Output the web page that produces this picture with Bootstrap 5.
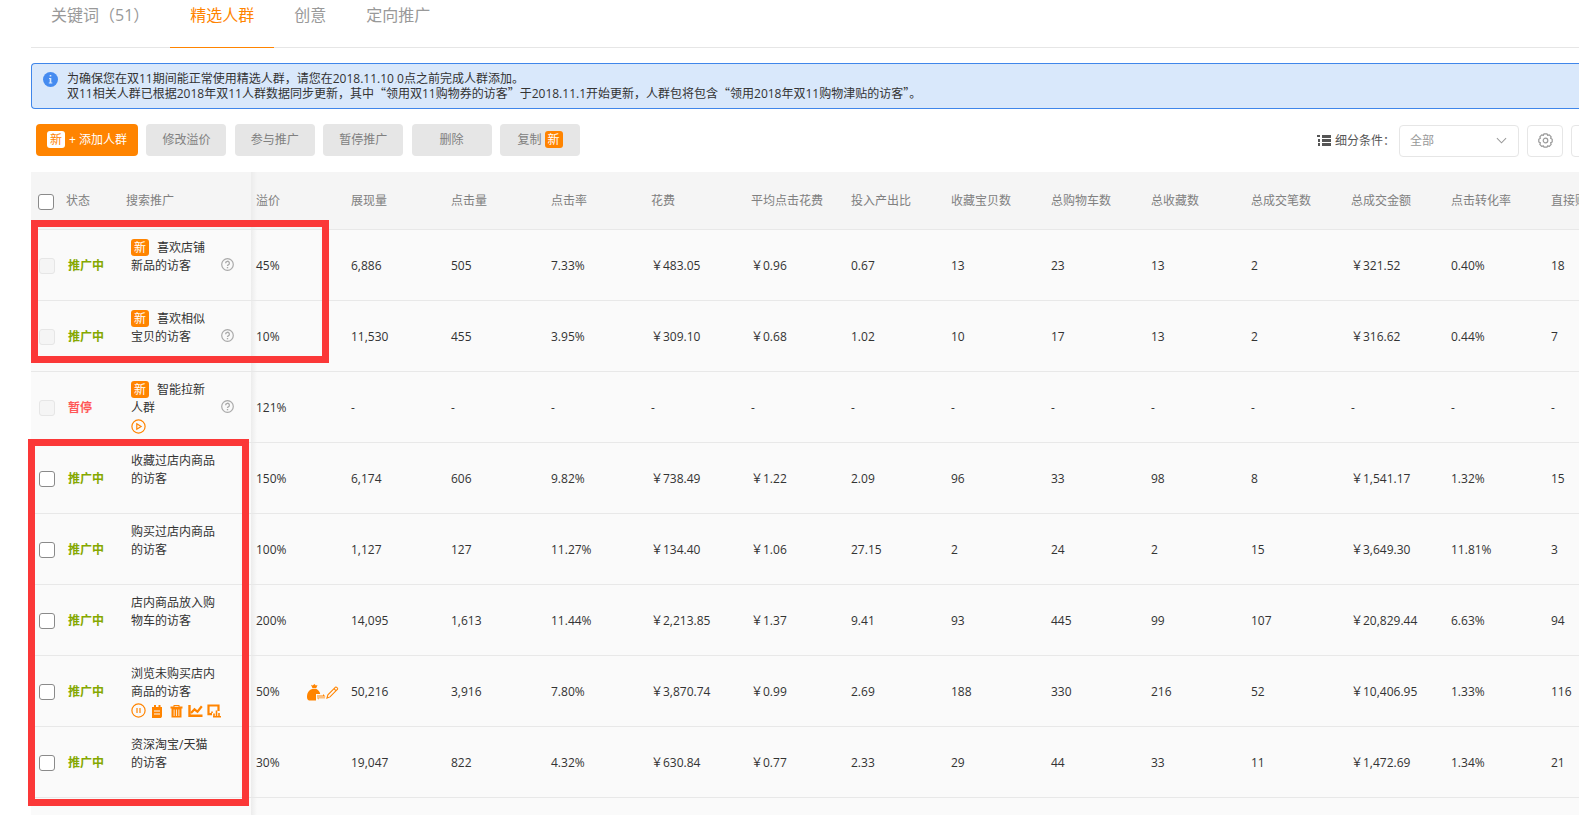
<!DOCTYPE html>
<html lang="zh-CN">
<head>
<meta charset="utf-8">
<meta name="viewport" content="width=device-width, initial-scale=1">
<title>精选人群</title>
<link href="https://cdn.jsdelivr.net/npm/bootstrap@5.3.0/dist/css/bootstrap.min.css" rel="stylesheet">
<style>
  :root { --brand: #ff8400; --line: #e6e6e6; }
  body { font-family: "Open Sans", "Noto Sans CJK SC", sans-serif; font-size: 12px; line-height: 18px; color: #333; background: #fff; }
  .page { padding-left: 31px; height: 100vh; overflow: hidden; }
  .cjk { font-family: "Noto Sans CJK SC", sans-serif; }

  .tabs { border-bottom: 1px solid var(--line); padding-top: 3px; flex-wrap: nowrap; }
  .tabs .nav-link { color: #999; font-size: 16px; line-height: 24px; padding: 0 20px 20px; margin-bottom: -1px; border-bottom: 1px solid transparent; white-space: nowrap; }
  .tabs .nav-link.active { color: var(--brand); border-color: var(--brand); }
  .tabs .nav-item:first-child { padding-right: 1px; }

  .notice { margin: 15px 0 0; padding: 8px 0 8px 11px; gap: 9px; line-height: 14px; color: #333; background: #d9e8fb; border: 1px solid #3f86ea; border-right: 0; border-radius: 4px 0 0 4px; height: 46px; }

  .toolbar { margin-top: 15px; padding-left: 5px; height: 32px; }
  .actions { width: 544px; }
  .act { width: 80px; height: 32px; padding: 0; font-size: 12px; line-height: 18px; color: #808080; background: #e6e6e6; border: 0; border-radius: 4px; white-space: nowrap; }
  .act-main { width: 102px; color: #fff; background: var(--brand); }
  .act:hover { background: #dcdcdc; }
  .act-main:hover { color: #fff; background: #f07c00; }
  .tag-new { display: inline-block; width: 18px; height: 17px; line-height: 17px; text-align: center; border-radius: 3px; color: #fff; background: var(--brand); }
  .act-main .tag-new { margin-right: 1px; color: var(--brand); background: #fff; }

  .filters { margin-right: -28px; padding-top: 1px; color: #555; }
  .filters .form-select { width: 120px; height: 32px; margin: 0 8px 0 4px; padding: 0 30px 0 10px; font-size: 12px; color: #999; border-color: var(--line); border-radius: 4px;
    background-image: url("data:image/svg+xml,%3Csvg xmlns='http://www.w3.org/2000/svg' viewBox='0 0 12 12'%3E%3Cpath d='M1 3.5l5 5 5-5' fill='none' stroke='%23999' stroke-width='1.1'/%3E%3C/svg%3E"); background-position: right 11px center; background-size: 11px 11px; }
  .sq { width: 36px; height: 32px; padding: 0; border: 1px solid var(--line); border-radius: 4px; color: #999; }

  .board { margin-top: 16px; }
  .grid { width: 1615px; table-layout: fixed; border-collapse: separate; border-spacing: 0; margin: 0; color: #333; }
  .grid > :not(caption) > * > * { padding: 0 0 0 5px; border-bottom: 1px solid #e8e8e8; background: #fafafa; color: #333; vertical-align: middle; white-space: nowrap; box-shadow: none; }
  .grid > thead > tr > th { height: 58px; font-weight: 400; color: #808080; background: #f5f5f5; }
  .grid > tbody > tr > td { height: 71px; padding-top: 2px; }
  .grid > * > tr > :first-child { padding-left: 8px; }
  .grid > tbody > tr > :first-child { padding-top: 0; }
  .grid > * > tr > :nth-child(2) { padding-left: 2px; font-weight: 700; color: #85a800; }
  .grid > thead > tr > :nth-child(2) { padding-left: 0; font-weight: 400; color: #808080; }
  .grid > thead > tr > :nth-child(3) { padding-left: 0; }
  .grid > thead > tr > :first-child { padding-left: 7px; }
  .grid > * > tr > :nth-child(4) { background-image: linear-gradient(90deg, #ececec, rgba(250, 250, 250, 0)); background-size: 6px 100%; background-repeat: no-repeat; }
  .grid > tbody > tr > td.paused { color: #ff5757; }
  .grid > tbody > tr > td.who { vertical-align: top; padding-top: 9px; white-space: normal; }
  .who-text { width: 86px; }
  .who-text .tag-new { margin-right: 8px; }
  .grid .form-check-input { display: block; width: 16px; height: 16px; margin: 2px 0 0; border: 1px solid #8a8a8a; border-radius: 3px; background-color: #fff; }
  .grid .form-check-input:disabled { border-color: var(--line); background-color: #f5f5f5; opacity: 1; }
  .help { margin: 19px 0 0 4px; color: #aaa; line-height: 1; }
  .tools { gap: 4px; height: 18px; }
  .tool { display: block; padding: 0; border: 0; background: none; color: var(--brand); line-height: 1; }
  .tool svg, .help svg, .sq svg, .notice svg, .filters svg { display: block; }
  .bid { padding-right: 7px; }

  .frame { position: absolute; border: 7px solid #fb3838; pointer-events: none; }
  .frame-top { left: 0; top: 48px; width: 298px; height: 143px; }
  .frame-bottom { left: -3px; top: 267px; width: 221px; height: 367px; }
</style>
</head>
<body>
<svg width="0" height="0" class="d-none" aria-hidden="true">
  <symbol id="i-help" viewBox="0 0 13 13"><circle cx="6.5" cy="6.5" r="5.8" fill="none" stroke="currentColor" stroke-width="1.2"/><path d="M4.600 5.200a1.900 1.900 0 1 1 2.700 1.700c-.6.3-.8.6-.8 1.200" fill="none" stroke="currentColor" stroke-width="1.300"/><path d="M5.800 9h1.400v1.300H5.800z" fill="currentColor"/></symbol>
</svg>
<main class="page">
  <ul class="nav tabs">
    <li class="nav-item"><a class="nav-link" href="#">关键词（51）</a></li>
    <li class="nav-item"><a class="nav-link active" aria-current="page" href="#">精选人群</a></li>
    <li class="nav-item"><a class="nav-link" href="#">创意</a></li>
    <li class="nav-item"><a class="nav-link" href="#">定向推广</a></li>
  </ul>

  <div class="notice d-flex align-items-start" role="note">
    <svg width="15" height="15" viewBox="0 0 15 15" class="flex-shrink-0" aria-hidden="true"><circle cx="7.500" cy="7.500" r="7.500" fill="#458bf0"/><path d="M6.700 3h1.600v1.600H6.700zM6 6h2.300v4.600h1v1H5.800v-1h.9V7H6z" fill="#d9e8fb"/></svg>
    <div>为确保您在双11期间能正常使用精选人群，请您在2018.11.10 0点之前完成人群添加。<br>双11相关人群已根据2018年双11人群数据同步更新，其中<span class="cjk">“</span>领用双11购物券的访客<span class="cjk">”</span>于2018.11.1开始更新，人群包将包含<span class="cjk">“</span>领用2018年双11购物津贴的访客<span class="cjk">”</span>。</div>
  </div>

  <div class="toolbar d-flex justify-content-between">
    <div class="actions d-flex justify-content-between">
      <button type="button" class="btn act act-main"><span class="tag-new">新</span> + 添加人群</button>
      <button type="button" class="btn act">修改溢价</button>
      <button type="button" class="btn act">参与推广</button>
      <button type="button" class="btn act">暂停推广</button>
      <button type="button" class="btn act">删除</button>
      <button type="button" class="btn act">复制 <span class="tag-new">新</span></button>
    </div>
    <div class="filters d-flex align-items-center">
      <svg width="14" height="11" viewBox="0 0 14 11" class="me-1" aria-hidden="true"><path d="M0 0h3v2H0zM5 0h9v3H5zM1 4h2v3H1zM5 4h9v3H5zM1 8h2v3H1zM5 8h9v3H5z" fill="#555"/></svg>
      <label for="segment">细分条件：</label>
      <select id="segment" class="form-select"><option>全部</option></select>
      <button type="button" class="btn sq d-flex align-items-center justify-content-center me-2" aria-label="设置">
        <svg width="15" height="15" viewBox="0 0 15 15" fill="none" stroke="currentColor" stroke-width="1.200"><path d="M6 .8h3l.6 1.500 1.700-.5 1.900 2-.6 1.500 1.600.9v2.700l-1.600.9.6 1.500-1.900 2-1.700-.5L9 14.200H6l-.6-1.400-1.700.5-1.900-2 .6-1.500L.8 8.900V6.200l1.600-.9-.6-1.500 1.900-2 1.700.5z" stroke-linejoin="round"/><circle cx="7.500" cy="7.500" r="2.300"/></svg>
      </button>
      <button type="button" class="btn sq" aria-label="更多"></button>
    </div>
  </div>

  <div class="board position-relative">
    <table class="table grid">
      <colgroup><col style="width:35px"><col style="width:60px"><col style="width:125px"><col style="width:95px"><col span="13" style="width:100px"></colgroup>
      <thead>
        <tr><th><input class="form-check-input" type="checkbox" aria-label="全选"></th><th>状态</th><th>搜索推广</th><th>溢价</th><th>展现量</th><th>点击量</th><th>点击率</th><th>花费</th><th>平均点击花费</th><th>投入产出比</th><th>收藏宝贝数</th><th>总购物车数</th><th>总收藏数</th><th>总成交笔数</th><th>总成交金额</th><th>点击转化率</th><th>直接购物车数</th></tr>
      </thead>
      <tbody>
        <tr>
          <td><input class="form-check-input" type="checkbox" disabled aria-label="喜欢店铺新品的访客"></td><td>推广中</td>
          <td class="who"><div class="d-flex"><div class="who-text"><span class="tag-new">新</span>喜欢店铺<br>新品的访客</div><span class="help"><svg width="13" height="13"><use href="#i-help"/></svg></span></div></td>
          <td>45%</td><td>6,886</td><td>505</td><td>7.33%</td><td>￥483.05</td><td>￥0.96</td><td>0.67</td><td>13</td><td>23</td><td>13</td><td>2</td><td>￥321.52</td><td>0.40%</td><td>18</td>
        </tr>
        <tr>
          <td><input class="form-check-input" type="checkbox" disabled aria-label="喜欢相似宝贝的访客"></td><td>推广中</td>
          <td class="who"><div class="d-flex"><div class="who-text"><span class="tag-new">新</span>喜欢相似<br>宝贝的访客</div><span class="help"><svg width="13" height="13"><use href="#i-help"/></svg></span></div></td>
          <td>10%</td><td>11,530</td><td>455</td><td>3.95%</td><td>￥309.10</td><td>￥0.68</td><td>1.02</td><td>10</td><td>17</td><td>13</td><td>2</td><td>￥316.62</td><td>0.44%</td><td>7</td>
        </tr>
        <tr>
          <td><input class="form-check-input" type="checkbox" disabled aria-label="智能拉新人群"></td><td class="paused">暂停</td>
          <td class="who"><div class="d-flex"><div class="who-text"><span class="tag-new">新</span>智能拉新<br>人群</div><span class="help"><svg width="13" height="13"><use href="#i-help"/></svg></span></div>
            <div class="tools d-flex align-items-center"><button type="button" class="tool" aria-label="启动"><svg width="15" height="15" viewBox="0 0 15 15" fill="none" stroke="currentColor" stroke-width="1.200"><circle cx="7.500" cy="7.500" r="6.600"/><path d="M5.800 4.800l4.300 2.700-4.300 2.700z"/></svg></button></div></td>
          <td>121%</td><td>-</td><td>-</td><td>-</td><td>-</td><td>-</td><td>-</td><td>-</td><td>-</td><td>-</td><td>-</td><td>-</td><td>-</td><td>-</td>
        </tr>
        <tr>
          <td><input class="form-check-input" type="checkbox" aria-label="收藏过店内商品的访客"></td><td>推广中</td>
          <td class="who"><div class="who-text">收藏过店内商品的访客</div></td>
          <td>150%</td><td>6,174</td><td>606</td><td>9.82%</td><td>￥738.49</td><td>￥1.22</td><td>2.09</td><td>96</td><td>33</td><td>98</td><td>8</td><td>￥1,541.17</td><td>1.32%</td><td>15</td>
        </tr>
        <tr>
          <td><input class="form-check-input" type="checkbox" aria-label="购买过店内商品的访客"></td><td>推广中</td>
          <td class="who"><div class="who-text">购买过店内商品的访客</div></td>
          <td>100%</td><td>1,127</td><td>127</td><td>11.27%</td><td>￥134.40</td><td>￥1.06</td><td>27.15</td><td>2</td><td>24</td><td>2</td><td>15</td><td>￥3,649.30</td><td>11.81%</td><td>3</td>
        </tr>
        <tr>
          <td><input class="form-check-input" type="checkbox" aria-label="店内商品放入购物车的访客"></td><td>推广中</td>
          <td class="who"><div class="who-text">店内商品放入购物车的访客</div></td>
          <td>200%</td><td>14,095</td><td>1,613</td><td>11.44%</td><td>￥2,213.85</td><td>￥1.37</td><td>9.41</td><td>93</td><td>445</td><td>99</td><td>107</td><td>￥20,829.44</td><td>6.63%</td><td>94</td>
        </tr>
        <tr>
          <td><input class="form-check-input" type="checkbox" aria-label="浏览未购买店内商品的访客"></td><td>推广中</td>
          <td class="who"><div class="who-text">浏览未购买店内商品的访客</div>
            <div class="tools d-flex align-items-center">
              <button type="button" class="tool" aria-label="暂停"><svg width="15" height="15" viewBox="0 0 15 15" fill="none" stroke="currentColor" stroke-width="1.200"><circle cx="7.500" cy="7.500" r="6.600"/><path d="M6 5v5M9 5v5"/></svg></button>
              <button type="button" class="tool" aria-label="记录"><svg width="15" height="15" viewBox="0 0 15 15" fill="currentColor"><path fill-rule="evenodd" d="M2 4h2V2h2v2h2.500V2h2v2H12v9.500L11 15H2zM4 7.500v1h6v-1zm0 3v1h6v-1z"/></svg></button>
              <button type="button" class="tool" aria-label="删除"><svg width="15" height="15" viewBox="0 0 15 15" fill="currentColor"><path fill-rule="evenodd" d="M1.500 3.500H4.500V2h6v1.500h3V5.500h-1v9h-10v-9h-1zM5.500 3v.8h4V3zM4.700 6.500V13h.8V6.500zm2.400 0V13h.8V6.500zm2.400 0V13h.8V6.500z"/></svg></button>
              <button type="button" class="tool" aria-label="趋势"><svg width="15" height="15" viewBox="0 0 15 15" fill="none" stroke="currentColor"><path d="M1.500 2v10.800H14.500" stroke-width="2.400"/><path d="M3 10L6.500 6.300l3 2.500 4.300-5.500" stroke-width="2.200"/></svg></button>
              <button type="button" class="tool" aria-label="报表"><svg width="15" height="15" viewBox="0 0 15 15" fill="none" stroke="currentColor"><path d="M5 11.200H1.500V2.500h10V8" stroke-width="2.200"/><path d="M5 10V8.500M7 14v-3.500M9.500 14V7.500M12 14v-4M6 13.800h8" stroke-width="1.600"/></svg></button>
            </div></td>
          <td><div class="bid d-flex justify-content-between align-items-center"><span>50%</span><span class="d-flex align-items-center">
            <button type="button" class="tool" aria-label="智能出价"><svg width="20" height="17" viewBox="0 0 20 17" fill="currentColor"><path d="M5 .8l1.700.8L8.500 0l1.300 1.500L11.500 1l-1.300 3.200H6.500zM6 5h4.500c2 1 3.500 3 3.700 5H10v6.500H4C1 16.500 1 14 1 12c0-3 2-6 5-7z"/><path d="M11 11.500h6V10l2.500 2.500h-8.500zM19 14.300h-6.500v1.500L11 13.500h8z"/></svg></button>
            <button type="button" class="tool" aria-label="编辑"><svg width="13" height="13" viewBox="0 0 13 13" fill="none" stroke="currentColor" stroke-width="1.100"><path d="M1 12l.9-3.200L9.500 1.200c.7-.6 2.700 1.200 2.100 2L4 10.900zM8 2.700l2.100 2.100"/></svg></button>
          </span></div></td><td>50,216</td><td>3,916</td><td>7.80%</td><td>￥3,870.74</td><td>￥0.99</td><td>2.69</td><td>188</td><td>330</td><td>216</td><td>52</td><td>￥10,406.95</td><td>1.33%</td><td>116</td>
        </tr>
        <tr>
          <td><input class="form-check-input" type="checkbox" aria-label="资深淘宝/天猫的访客"></td><td>推广中</td>
          <td class="who"><div class="who-text">资深淘宝/天猫<br>的访客</div></td>
          <td>30%</td><td>19,047</td><td>822</td><td>4.32%</td><td>￥630.84</td><td>￥0.77</td><td>2.33</td><td>29</td><td>44</td><td>33</td><td>11</td><td>￥1,472.69</td><td>1.34%</td><td>21</td>
        </tr>
        <tr><td></td><td></td><td></td><td></td><td></td><td></td><td></td><td></td><td></td><td></td><td></td><td></td><td></td><td></td><td></td><td></td><td></td></tr>
      </tbody>
    </table>
    <div class="frame frame-top"></div>
    <div class="frame frame-bottom"></div>
  </div>
</main>
<script src="https://cdn.jsdelivr.net/npm/bootstrap@5.3.0/dist/js/bootstrap.bundle.min.js"></script>
</body>
</html>
